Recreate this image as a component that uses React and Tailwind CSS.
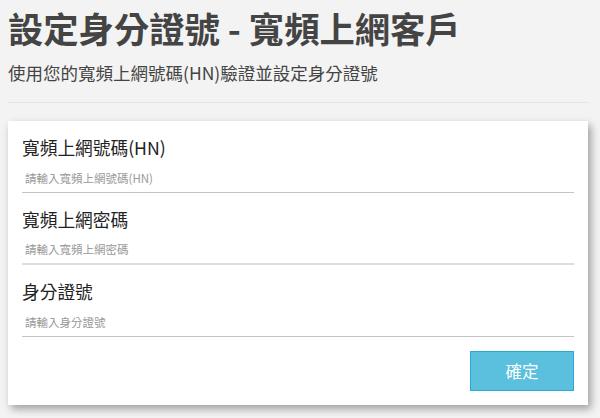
const FONT = { fontFamily: '"Noto Sans CJK TC", "Noto Sans", sans-serif' }

function Field({ label, placeholder, line }) {
  return (
    <div className="mb-[14px]">
      <div className="h-[24px] leading-[24px] text-[17.7px] text-[#222] mb-[4px]">{label}</div>
      <input
        type="text"
        placeholder={placeholder}
        className={`block w-full h-[30px] px-[3px] text-[11.5px] text-[#333] placeholder:text-[#999] bg-transparent outline-none ${line}`}
        style={FONT}
      />
    </div>
  )
}

export default function App() {
  return (
    <div className="min-h-[418px] bg-[#f3f3f3] px-2 pb-4" style={FONT}>
      <h1 className="pt-[7px] h-[48px] leading-[41px] text-[35.3px] font-bold text-[#444] whitespace-nowrap">
        設定身分證號 - 寬頻上網客戶
      </h1>
      <p className="mt-[13px] leading-[24px] text-[17.5px] text-[#444]">
        使用您的寬頻上網號碼(HN)驗證並設定身分證號
      </p>
      <div className="mt-[17px] border-t border-[#e6e6e6] w-[581px]" />
      <div className="mt-[18px] w-[580px] bg-white p-[14px] shadow-[3px_4px_8px_rgba(0,0,0,0.35)]">
        <Field label="寬頻上網號碼(HN)" placeholder="請輸入寬頻上網號碼(HN)" line="border-b border-[#c4c4c4]" />
        <Field label="寬頻上網密碼" placeholder="請輸入寬頻上網密碼" line="border-b-2 border-[#dedede]" />
        <Field label="身分證號" placeholder="請輸入身分證號" line="border-b border-[#c4c4c4]" />
        <div className="flex justify-end">
          <button
            type="button"
            className="w-[104px] h-[40px] bg-[#5bc0de] border border-[#2aa8d6] text-white text-[16.5px]"
          >
            確定
          </button>
        </div>
      </div>
    </div>
  )
}
